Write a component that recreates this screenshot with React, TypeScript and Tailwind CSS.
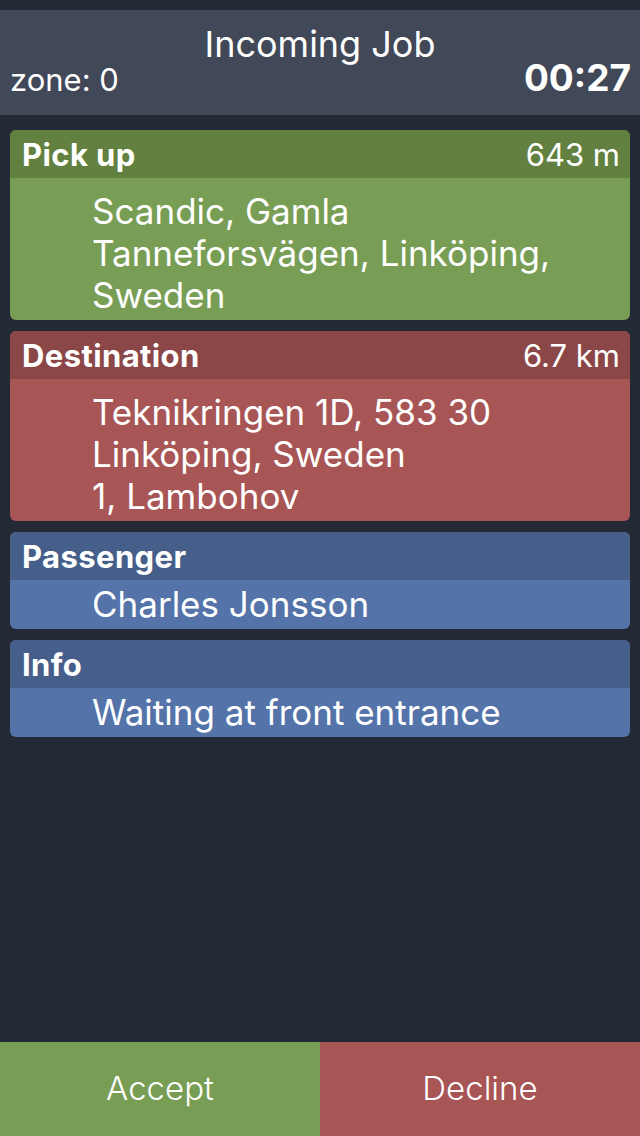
import type { FC, ReactNode } from "react";

type CardProps = {
  title: string;
  value?: string;
  head: string;
  body: string;
  multi?: boolean;
  children: ReactNode;
};

const Card: FC<CardProps> = ({ title, value, head, body, multi, children }) => {
  return (
    <div className={`${body} rounded-[6px] overflow-hidden text-white`}>
      <div className={`${head} flex justify-between items-center pl-[12px] pr-[10px] h-[48px]`}>
        <span className="font-bold text-[31px] leading-none tracking-[0.4px]">{title}</span>
        {value && <span className="text-[31px] leading-none">{value}</span>}
      </div>
      <div className={`${multi ? "pt-[12px]" : "pt-[3px]"} pb-[4px] pl-[82px] pr-[10px] text-[35px] leading-[42px]`}>
        {children}
      </div>
    </div>
  );
};

const App: FC = () => {
  return (
    <div className="flex flex-col bg-[#232a35] w-[640px] h-[1136px] font-['Inter',sans-serif] text-white">
      <div className="pt-[10px]">
        <div className="bg-[#414858] h-[105px]">
          <div className="pt-[16px] text-[36px] text-center leading-[36px]">Incoming Job</div>
          <div className="flex justify-between items-end -mt-[3px] px-[10px]">
            <span className="text-[31px] leading-[34px]">zone: 0</span>
            <span className="-mr-[1px] font-bold text-[37px] leading-[38px]">00:27</span>
          </div>
        </div>
      </div>

      <div className="flex flex-col gap-[11px] px-[10px] pt-[15px]">
        <Card title="Pick up" value="643 m" head="bg-[#628040]" body="bg-[#789e55]" multi>
          Scandic, Gamla
          <br />
          Tanneforsvägen, Linköping,
          <br />
          Sweden
        </Card>
        <Card title="Destination" value="6.7 km" head="bg-[#8b4747]" body="bg-[#a85555]" multi>
          Teknikringen 1D, 583 30
          <br />
          Linköping, Sweden
          <br />
          1, Lambohov
        </Card>
        <Card title="Passenger" head="bg-[#465f8a]" body="bg-[#5373a9]">
          Charles Jonsson
        </Card>
        <Card title="Info" head="bg-[#465f8a]" body="bg-[#5373a9]">
          Waiting at front entrance
        </Card>
      </div>

      <div className="flex-1" />

      <div className="grid grid-cols-2 h-[94px]">
        <button className="bg-[#789e55] font-light text-[33px] text-white">Accept</button>
        <button className="bg-[#a85555] font-light text-[33px] text-white">Decline</button>
      </div>
    </div>
  );
};

export default App;
